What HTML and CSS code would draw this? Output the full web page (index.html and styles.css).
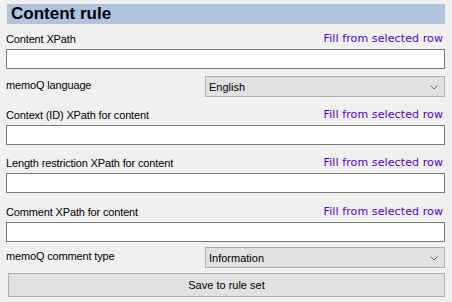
FILE: index.html
```html
<!DOCTYPE html>
<html>
 <head>
  <title>Content rule</title>
  <link rel="stylesheet" href="styles.css">
 </head>
<body>
<div class="panel">
 <div class="header">Content rule</div>

 <div class="caption first">
  <span class="label">Content XPath</span>
  <a class="fill" href="#">Fill from selected row</a>
 </div>
 <div class="textbox"></div>

 <div class="pick">
  <span class="label">memoQ language</span>
  <div class="combo"><span>English</span>
   <svg width="8" height="5" viewBox="0 0 8 5"><path d="M0.5 0.5 L4 4 L7.5 0.5" fill="none" stroke="#5f5f5f" stroke-width="1"/></svg>
  </div>
 </div>

 <div class="caption">
  <span class="label">Context (ID) XPath for content</span>
  <a class="fill" href="#">Fill from selected row</a>
 </div>
 <div class="textbox"></div>

 <div class="caption">
  <span class="label">Length restriction XPath for content</span>
  <a class="fill" href="#">Fill from selected row</a>
 </div>
 <div class="textbox"></div>

 <div class="caption tall">
  <span class="label">Comment XPath for content</span>
  <a class="fill" href="#">Fill from selected row</a>
 </div>
 <div class="textbox"></div>

 <div class="pick near">
  <span class="label">memoQ comment type</span>
  <div class="combo"><span>Information</span>
   <svg width="8" height="5" viewBox="0 0 8 5"><path d="M0.5 0.5 L4 4 L7.5 0.5" fill="none" stroke="#5f5f5f" stroke-width="1"/></svg>
  </div>
 </div>

 <div class="button">Save to rule set</div>
</div>
</body>
</html>
```
FILE: styles.css
```css
BODY {
 margin: 0;
 background: #f0f0f0;
 font-family: "Liberation Sans", Arial, sans-serif;
 font-size: 11px;
 color: #000000;
}
.panel {
 width: 439px;
 padding: 4px 0 0 6px;
 display: flex;
 flex-direction: column;
}
.header {
 margin-left: 1px;
 height: 20px;
 line-height: 20px;
 padding-left: 4px;
 background: #b0c4de;
 font-size: 17px;
 font-weight: bold;
 color: #000000;
}
.caption {
 height: 28px;
 padding-bottom: 3px;
 box-sizing: border-box;
 display: flex;
 justify-content: space-between;
 align-items: flex-end;
}
.caption.first { height: 25px; }
.caption.tall  { height: 29px; }
.label {
 line-height: 14px;
 letter-spacing: -0.15px;
}
.fill {
 font-family: "DejaVu Sans", Verdana, sans-serif;
 font-size: 11px;
 line-height: 14px;
 letter-spacing: 0.1px;
 color: #4f00d4;
 text-decoration: none;
 margin-right: 2px;
}
.textbox {
 height: 20px;
 box-sizing: border-box;
 border: 1px solid #7a7a7a;
 background: #ffffff;
}
.pick {
 margin-top: 7px;
 display: flex;
 justify-content: space-between;
 align-items: flex-start;
}
.pick.near { margin-top: 5px; }
.pick .label {
 margin-top: 2px;
}
.combo {
 width: 240px;
 height: 21px;
 box-sizing: border-box;
 border: 1px solid #adadad;
 background: #e1e1e1;
 display: flex;
 align-items: center;
 justify-content: space-between;
 padding: 1px 6px 0 3px;
}
.combo SVG {
 display: block;
 margin-top: 1px;
}
.button {
 margin: 5px 0 0 2px;
 height: 24px;
 box-sizing: border-box;
 border: 1px solid #adadad;
 background: #e1e1e1;
 display: flex;
 align-items: center;
 justify-content: center;
}
```
